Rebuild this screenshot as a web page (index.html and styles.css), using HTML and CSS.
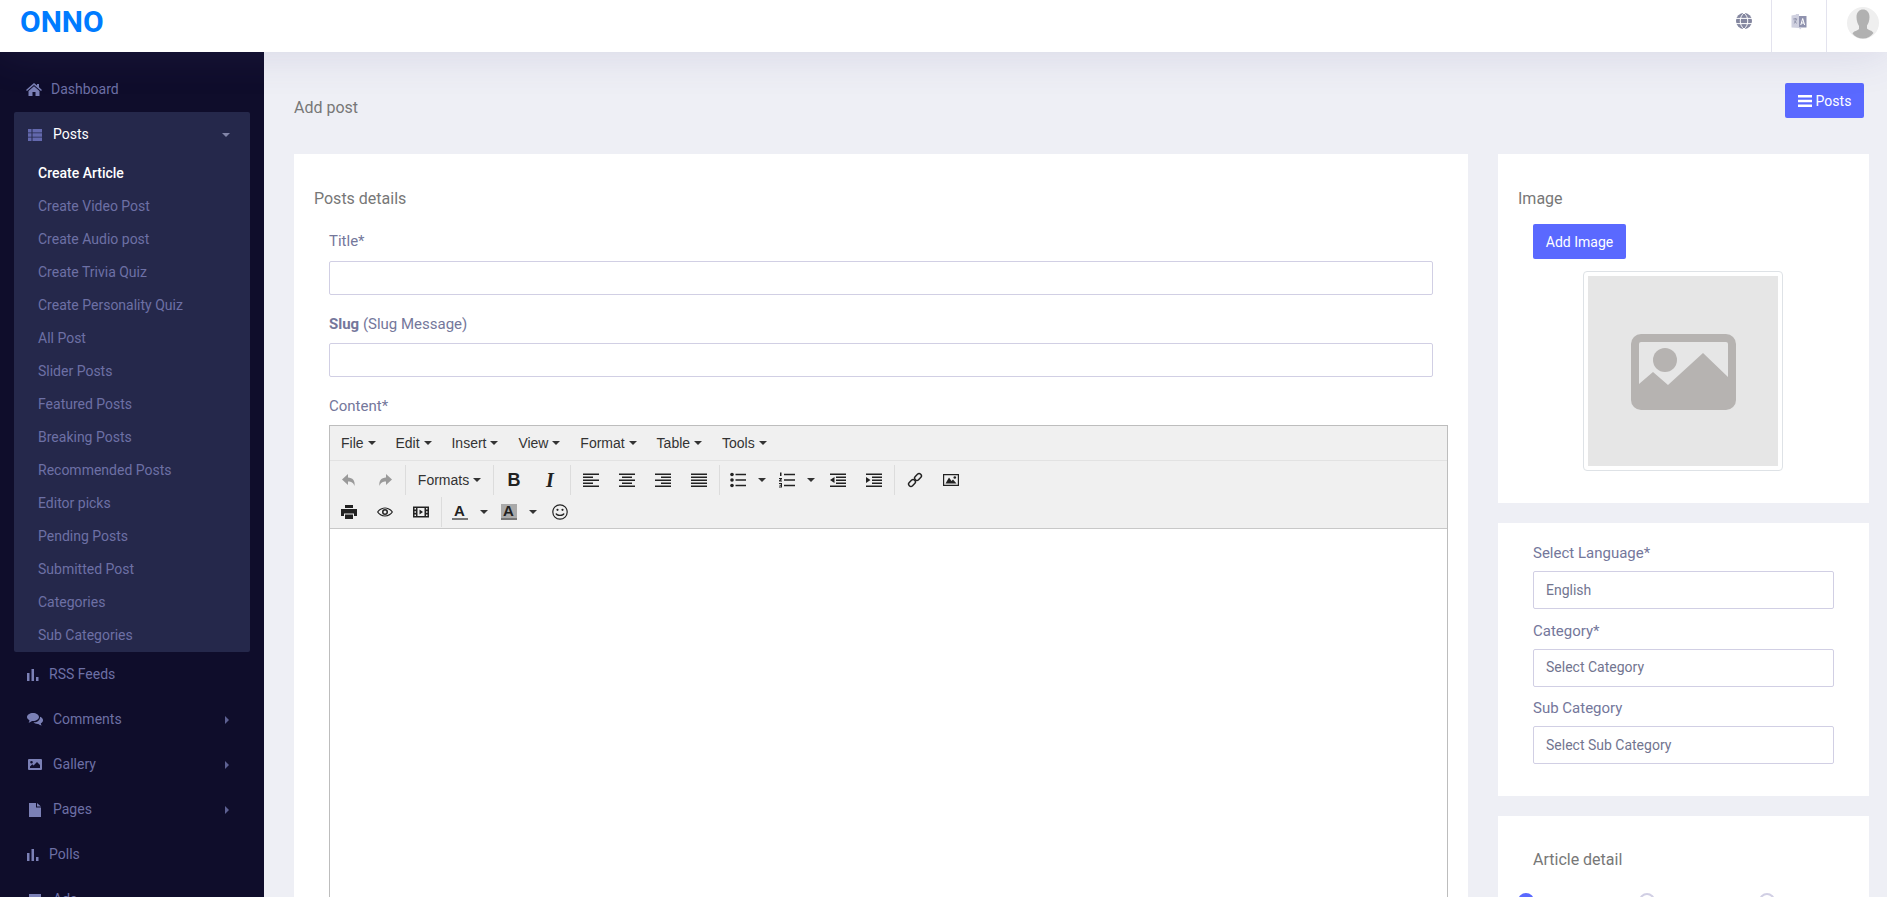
FILE: index.html
```html
<!DOCTYPE html>
<html lang="en">
<head>
<meta charset="utf-8">
<title>Add post</title>
<link rel="stylesheet" href="styles.css">
</head>
<body>
<header class="topbar">
  <a class="logo">ONNO</a>
  <div class="top-actions">
    <div class="top-cell">
      <svg class="top-icon" viewBox="0 0 16 16"><circle cx="8" cy="8" r="8" fill="#83869f"/><path d="M0 5.400h16M0 10.600h16M8 0c-5 4-5 12 0 16M8 0c5 4 5 12 0 16" fill="none" stroke="#fff" stroke-width="1"/></svg>
    </div>
    <div class="top-cell">
      <svg class="top-icon translate" viewBox="0 0 16 17"><path d="M.5 2.500L8 1v14L.5 14.500z" fill="#cfd0df"/><path d="M8 3h7.500v11.500H8z" fill="#8f92ae"/><path d="M5 1l3 0v2H5zM8 14.500h3L9 16.500z" fill="#cfd0df"/><path d="M9.800 12l1.900-6.500 1.900 6.500M10.500 10h2.500" fill="none" stroke="#fff" stroke-width="1"/><path d="M2.300 6h3.800M4.200 5v1M2.900 10.500c1.500-1 2.100-2.600 2.400-4.500M3.300 7.500c.5 1.300 1.300 2.300 2.500 2.800" fill="none" stroke="#83869f" stroke-width=".8"/></svg>
    </div>
    <div class="avatar">
      <svg viewBox="0 0 32 32"><circle cx="16" cy="16" r="16" fill="#efefef"/><path d="M9.500 10c0-5 3-7.500 6.500-7.500s6.500 2.500 6.500 7.500c0 4-1.300 7-2.500 8.500v3c1 1.500 5.500 2 6.500 4.500-2.500 3.500-6 5.500-10.500 5.500S8 30 5.500 26.500c1-2.500 5.500-3 6.500-4.500v-3C10.800 17 9.500 14 9.500 10z" fill="#b1b1b1"/></svg>
    </div>
  </div>
</header>

<div class="shell">
  <aside class="sidebar">
    <nav class="nav">
      <a class="nav-row">
        <svg class="nav-icon i-home" viewBox="0 0 16 13"><path d="M8 0l3 2.600V1h2v3.300L16 7l-1 1-7-6-7 6-1-1zM2.500 8L8 3.300 13.500 8v5H9.500V9h-3v4h-4z"/></svg>
        <span class="lbl-short">Dashboard</span>
      </a>
      <div class="nav-group">
        <a class="nav-row active">
          <svg class="nav-icon i-list" viewBox="0 0 14 12"><path d="M0 0h3.500v3.400H0zM4.500 0H14v3.400H4.500zM0 4.300h3.500v3.400H0zM4.500 4.300H14v3.400H4.500zM0 8.600h3.500V12H0zM4.500 8.600H14V12H4.500z"/></svg>
          <span class="lbl-wide">Posts</span>
          <span class="caret-down"></span>
        </a>
        <ul class="sub">
          <li class="current">Create Article</li>
          <li>Create Video Post</li>
          <li>Create Audio post</li>
          <li>Create Trivia Quiz</li>
          <li>Create Personality Quiz</li>
          <li>All Post</li>
          <li>Slider Posts</li>
          <li>Featured Posts</li>
          <li>Breaking Posts</li>
          <li>Recommended Posts</li>
          <li>Editor picks</li>
          <li>Pending Posts</li>
          <li>Submitted Post</li>
          <li>Categories</li>
          <li>Sub Categories</li>
        </ul>
      </div>
      <a class="nav-row">
        <svg class="nav-icon i-bars" viewBox="0 0 12 12"><path d="M0 4h2.500v8H0zM4.500 0H7v12H4.500zM9 8h2.500v4H9z"/></svg>
        <span class="lbl-short">RSS Feeds</span>
      </a>
      <a class="nav-row">
        <svg class="nav-icon i-comments" viewBox="0 0 16 13"><path d="M6 0c3.300 0 6 1.800 6 4s-2.700 4-6 4l-1-.1C4 8.800 3 9.300 1.500 9.500 2.300 8.700 2.500 8 2.400 7.200.9 6.500 0 5.300 0 4c0-2.200 2.700-4 6-4z"/><path d="M13 3.800c1.800.7 3 1.900 3 3.400 0 1.200-.8 2.300-2.200 3 .1.800.3 1.500 1 2.300-1.500-.2-2.500-.7-3.500-1.500-2.100.1-3.800-.5-4.800-1.700 3.700.2 6.800-2 6.500-5.500z"/></svg>
        <span class="lbl-wide">Comments</span>
        <span class="caret-right"></span>
      </a>
      <a class="nav-row">
        <svg class="nav-icon i-gallery" viewBox="0 0 14 11"><path fill-rule="evenodd" d="M1 0h12a1 1 0 0 1 1 1v9a1 1 0 0 1-1 1H1a1 1 0 0 1-1-1V1a1 1 0 0 1 1-1zM3.500 2a1.300 1.300 0 1 0 0 2.600 1.300 1.300 0 0 0 0-2.600zM2 9h10V6L9 3 5.500 6.500 4.300 5.300 2 7.500z"/></svg>
        <span class="lbl-wide">Gallery</span>
        <span class="caret-right"></span>
      </a>
      <a class="nav-row">
        <svg class="nav-icon i-file" viewBox="0 0 12 14"><path d="M0 0h7v4.500h5V14H0zM8 0l4 3.500H8z"/></svg>
        <span class="lbl-wide">Pages</span>
        <span class="caret-right"></span>
      </a>
      <a class="nav-row">
        <svg class="nav-icon i-bars" viewBox="0 0 12 12"><path d="M0 4h2.500v8H0zM4.500 0H7v12H4.500zM9 8h2.500v4H9z"/></svg>
        <span class="lbl-short">Polls</span>
      </a>
      <a class="nav-row">
        <svg class="nav-icon i-gallery" viewBox="0 0 14 11"><path d="M1 0h12v11H1z"/></svg>
        <span class="lbl-wide">Ads</span>
      </a>
    </nav>
  </aside>

  <main class="content">
    <div class="page-head">
      <h1 class="page-title">Add post</h1>
      <a class="btn btn-posts">
        <svg class="btn-icon" viewBox="0 0 14 12"><path d="M0 0h14v2.600H0zM0 4.700h14v2.600H0zM0 9.400h14V12H0z"/></svg>
        Posts
      </a>
    </div>

    <div class="columns">
      <section class="card card-main">
        <h2 class="card-title">Posts details</h2>
        <div class="form-block">
          <div class="field">
            <label class="field-label label-first">Title*</label>
            <input class="text-input" type="text">
          </div>
          <div class="field">
            <label class="field-label"><b>Slug</b> (Slug Message)</label>
            <input class="text-input" type="text">
          </div>
          <div class="field">
            <label class="field-label">Content*</label>
            <div class="editor">
              <div class="menubar">
                <span class="menu-item">File<i class="tc"></i></span>
                <span class="menu-item">Edit<i class="tc"></i></span>
                <span class="menu-item">Insert<i class="tc"></i></span>
                <span class="menu-item">View<i class="tc"></i></span>
                <span class="menu-item">Format<i class="tc"></i></span>
                <span class="menu-item">Table<i class="tc"></i></span>
                <span class="menu-item">Tools<i class="tc"></i></span>
              </div>
              <div class="toolbar">
                <div class="tb-row">
                  <div class="tb-group tight">
                    <span class="tb"><svg class="ic" viewBox="0 0 16 16"><path class="off" d="M7 2L1 7.500 7 13V9.500c3.200 0 5.300.9 6.500 4.500.9-5.500-2-8.300-6.500-8.500z"/></svg></span>
                    <span class="tb"><svg class="ic" viewBox="0 0 16 16"><path class="off" d="M9 2l6 5.500L9 13V9.500c-3.200 0-5.300.9-6.500 4.500-.9-5.500 2-8.300 6.500-8.500z"/></svg></span>
                  </div>
                  <div class="tb-group">
                    <span class="tb tb-formats">Formats<i class="tc"></i></span>
                  </div>
                  <div class="tb-group">
                    <span class="tb tb-bold">B</span>
                    <span class="tb tb-italic">I</span>
                  </div>
                  <div class="tb-group">
                    <span class="tb"><svg class="ic" viewBox="0 0 16 16"><path d="M0 1.500h16v1.500H0zM0 4.500h10v1.500H0zM0 7.500h16v1.500H0zM0 10.500h10v1.500H0zM0 13.500h16v1.500H0z"/></svg></span>
                    <span class="tb"><svg class="ic" viewBox="0 0 16 16"><path d="M0 1.500h16v1.500H0zM3 4.500h10v1.500H3zM0 7.500h16v1.500H0zM3 10.500h10v1.500H3zM0 13.500h16v1.500H0z"/></svg></span>
                    <span class="tb"><svg class="ic" viewBox="0 0 16 16"><path d="M0 1.500h16v1.500H0zM6 4.500h10v1.500H6zM0 7.500h16v1.500H0zM6 10.500h10v1.500H6zM0 13.500h16v1.500H0z"/></svg></span>
                    <span class="tb"><svg class="ic" viewBox="0 0 16 16"><path d="M0 1.500h16v1.500H0zM0 4.500h16v1.500H0zM0 7.500h16v1.500H0zM0 10.500h16v1.500H0zM0 13.500h16v1.500H0z"/></svg></span>
                  </div>
                  <div class="tb-group">
                    <span class="tb tb-split"><svg class="ic" viewBox="0 0 16 16"><circle cx="2" cy="2.500" r="1.800"/><circle cx="2" cy="8" r="1.800"/><circle cx="2" cy="13.500" r="1.800"/><path d="M5.500 1.700H16v1.500H5.500zM5.500 7.200H16v1.500H5.500zM5.500 12.700H16v1.500H5.500z"/></svg></span>
                    <span class="tb-caret"><i class="tc"></i></span>
                    <span class="tb tb-split"><svg class="ic" viewBox="0 0 16 16"><path d="M1 .5h1.500v3.500H1zM0 6h3v1l-1.500 1.500H3v1H0v-1L1.500 7H0zM0 11h3v4.500H0v-1h2v-.8H.500v-1H2V12H0z"/><path d="M5 1.700h11v1.500H5zM5 7.200h11v1.500H5zM5 12.700h11v1.500H5z"/></svg></span>
                    <span class="tb-caret"><i class="tc"></i></span>
                    <span class="tb"><svg class="ic" viewBox="0 0 16 16"><path d="M0 1.500h16v1.500H0zM6 4.500h10v1.500H6zM6 7.500h10v1.500H6zM6 10.500h10v1.500H6zM0 13.500h16v1.500H0zM4.500 5v6L0 8z"/></svg></span>
                    <span class="tb"><svg class="ic" viewBox="0 0 16 16"><path d="M0 1.500h16v1.500H0zM6 4.500h10v1.500H6zM6 7.500h10v1.500H6zM6 10.500h10v1.500H6zM0 13.500h16v1.500H0zM0 5v6l4.500-3z"/></svg></span>
                  </div>
                  <div class="tb-group end">
                    <span class="tb"><svg class="ic" viewBox="0 0 16 16"><g fill="none" stroke="#222" stroke-width="1.500"><rect x="-3.800" y="-2.300" width="7.600" height="4.600" rx="2.300" transform="translate(5 11) rotate(-45)"/><rect x="-3.800" y="-2.300" width="7.600" height="4.600" rx="2.300" transform="translate(11 5) rotate(-45)"/></g></svg></span>
                    <span class="tb"><svg class="ic" viewBox="0 0 16 16"><path fill-rule="evenodd" d="M0 2h16v12H0zM1.200 3.200v9.600h13.600V3.200z"/><path d="M2.500 11.500l3.500-6 2.500 3.500 1.500-1.500 3.500 4z"/><circle cx="11.800" cy="5.500" r="1.300"/></svg></span>
                  </div>
                </div>
                <div class="tb-row">
                  <div class="tb-group tight">
                    <span class="tb"><svg class="ic" viewBox="0 0 16 16"><path d="M4 1h8v3H4zM0 5h16v7h-3V9.500H3V12H0zM4 10.500h8V15H4z"/></svg></span>
                    <span class="tb"><svg class="ic" viewBox="0 0 16 16"><path fill-rule="evenodd" d="M8 3.500c3.500 0 6.500 2 8 4.500-1.500 2.500-4.500 4.500-8 4.500S1.500 10.500 0 8c1.500-2.500 4.500-4.500 8-4.500zM8 4.500C5.700 4.500 3 5.900 1.300 8 3 10.100 5.700 11.500 8 11.500s5-1.400 6.700-3.500C13 5.900 10.300 4.500 8 4.500z"/><path fill-rule="evenodd" d="M8 5a3 3 0 1 1 0 6 3 3 0 0 1 0-6zM8 6.500a1.500 1.500 0 1 0 0 3 1.500 1.500 0 0 0 0-3z"/></svg></span>
                    <span class="tb"><svg class="ic" viewBox="0 0 16 16"><path fill-rule="evenodd" d="M0 2.500h16v11H0zM1.500 4v1.500h1.500V4zM1.500 7.200v1.500h1.500V7.200zM1.500 10.500V12h1.500v-1.500zM13 4v1.500h1.500V4zM13 7.200v1.500h1.500V7.200zM13 10.500V12h1.500v-1.500zM4.500 4v8h7V4z"/><path d="M6.500 5.500L10 8l-3.500 2.500z"/></svg></span>
                  </div>
                  <div class="tb-group end">
                    <span class="tb tb-split"><span class="letter">A</span></span>
                    <span class="tb-caret"><i class="tc"></i></span>
                    <span class="tb tb-split"><span class="letter bg">A</span></span>
                    <span class="tb-caret"><i class="tc"></i></span>
                    <span class="tb"><svg class="ic" viewBox="0 0 16 16"><g fill="none" stroke="#222" stroke-width="1.200"><circle cx="8" cy="8" r="7.200"/><path d="M4 9.500c1 2.500 7 2.500 8 0" stroke-width="1.400"/></g><circle cx="5.500" cy="5.800" r="1.100"/><circle cx="10.500" cy="5.800" r="1.100"/></svg></span>
                  </div>
                </div>
              </div>
              <div class="editor-body"></div>
            </div>
          </div>
        </div>
      </section>

      <div class="side">
        <section class="card card-image">
          <h2 class="card-title">Image</h2>
          <a class="btn btn-add">Add Image</a>
          <div class="thumb">
            <svg class="thumb-img" viewBox="0 0 190 190"><rect width="190" height="190" fill="#e6e6e6"/><g transform="translate(43 58)"><rect width="105" height="76" rx="10" fill="#b6b3b1"/><path d="M8 10q0-2 2-2h85q2 0 2 2v33L72 19 37 51 22 38 8 50z" fill="#e6e6e6"/><circle cx="34" cy="26" r="12" fill="#b6b3b1"/></g></svg>
          </div>
        </section>

        <section class="card card-selects">
          <div class="sel-field">
            <label class="field-label">Select Language*</label>
            <select class="select"><option>English</option></select>
          </div>
          <div class="sel-field">
            <label class="field-label">Category*</label>
            <select class="select"><option>Select Category</option></select>
          </div>
          <div class="sel-field">
            <label class="field-label">Sub Category</label>
            <select class="select"><option>Select Sub Category</option></select>
          </div>
        </section>

        <section class="card card-detail">
          <h2 class="card-title">Article detail</h2>
          <div class="radios">
            <span class="radio on"></span>
            <span class="radio"></span>
            <span class="radio"></span>
          </div>
        </section>
      </div>
    </div>
  </main>
</div>
</body>
</html>
```

FILE: styles.css
```css
* { box-sizing: border-box; }
html, body { margin: 0; height: 897px; overflow: hidden; }
body { font-family: Roboto, "Liberation Sans", sans-serif; font-size: 14px; background: #eeeff5; color: #74779b; }

.topbar { height: 52px; background: #fff; display: flex; justify-content: space-between; position: relative; z-index: 2; box-shadow: 0 0 45px rgba(90, 80, 150, .16); }
.logo { color: #007bff; font-weight: 700; font-size: 30px; line-height: 44px; padding-left: 20px; }
.top-actions { display: flex; }
.top-cell { width: 55px; border-right: 1px solid #e3e3ee; display: flex; align-items: flex-start; justify-content: center; padding-top: 13px; }
.top-icon { width: 16px; height: 16px; }
.translate { height: 17px; }
.avatar { width: 60px; padding: 7px 0 0 20px; }
.avatar svg { width: 32px; height: 32px; display: block; }

.shell { display: flex; height: 845px; }
.sidebar { width: 264px; flex: none; background: #0f0d2b; overflow: hidden; padding: 15px 14px 0; }
.nav-row { height: 45px; display: flex; align-items: center; color: #6d70a5; padding: 0 0 2px 13px; }
.nav-icon { fill: #7b80b6; flex: none; position: relative; top: 1px; }
.i-home { width: 16px; height: 13px; margin-left: -1px; margin-right: 9px; }
.i-list { width: 14px; height: 12px; margin-left: 1px; margin-right: 11px; }
.i-bars { width: 12px; height: 12px; margin-right: 10px; }
.i-comments { width: 16px; height: 13px; margin-right: 10px; }
.i-gallery { width: 14px; height: 11px; margin-left: 1px; margin-right: 11px; }
.i-file { width: 12px; height: 14px; margin-left: 2px; margin-right: 12px; }
.lbl-short { flex: none; }
.lbl-wide { flex: 1; }
.nav-group { background: #25284b; border-radius: 2px; }
.nav-row.active { color: #fff; }
.nav-row.active .nav-icon { fill: #6368ad; }
.caret-down { width: 0; height: 0; border-left: 4px solid transparent; border-right: 4px solid transparent; border-top: 4px solid #8285a8; margin: 2px 20px 0 0; }
.caret-right { width: 0; height: 0; border-top: 4px solid transparent; border-bottom: 4px solid transparent; border-left: 4px solid #5d6092; margin: 2px 21px 0 0; }
.sub { list-style: none; margin: 0; padding: 0 0 0 24px; }
.sub li { height: 33px; line-height: 33px; color: #6d70a5; }
.sub li.current { color: #fff; font-weight: 500; }

.content { flex: 1; min-width: 0; padding: 0 18px 0 30px; overflow: hidden; }
.page-head { height: 102px; display: flex; justify-content: space-between; align-items: flex-start; padding: 31px 5px 0 0; }
.page-title { margin: 15px 0 0; font-size: 16px; line-height: 20px; font-weight: 400; color: #777; }
.btn { background: #5a69ff; color: #fff; border-radius: 2px; height: 35px; display: inline-flex; align-items: center; justify-content: center; font-size: 14px; }
.btn-posts { width: 79px; }
.btn-icon { width: 14px; height: 12px; fill: #fff; margin-right: 4px; }
.columns { display: grid; grid-template-columns: 1174px 371px; column-gap: 30px; align-items: start; }
.card { background: #fff; }
.card-title { margin: 0; font-size: 16px; line-height: 24px; font-weight: 400; color: #777; }
.card-main { padding: 33px 35px 0 20px; height: 760px; }
.form-block { padding: 20px 0 0 15px; }
.field { margin-bottom: 19px; }
.field-label { display: block; font-size: 15px; line-height: 21px; color: #74779b; margin-bottom: 8px; }
.label-first { margin-bottom: 9px; }
.text-input { display: block; width: 100%; height: 34px; border: 1px solid #d1cfe4; border-radius: 2px; background: #fff; outline: 0; }

.editor { border: 1px solid #bdbdbd; margin: 1px -15px 0 0; background: #fff; font-family: "Liberation Sans", Arial, sans-serif; color: #333; }
.menubar { height: 35px; background: #f0f0f0; border-bottom: 1px solid #e2e2e2; display: flex; align-items: center; padding-left: 11px; font-size: 14px; }
.menu-item { padding-right: 19.900px; display: inline-flex; align-items: center; }
.tc { display: inline-block; width: 0; height: 0; border-left: 4px solid transparent; border-right: 4px solid transparent; border-top: 4px solid #333; margin-left: 4px; }
.toolbar { background: #f0f0f0; height: 68px; border-bottom: 1px solid #c8c8c8; padding-top: 3px; }
.tb-row { display: flex; height: 32px; }
.tb-group { display: flex; padding: 0 2px; border-right: 1px solid #dcdcdc; margin: 1px 0; }
.tb-group.tight { padding-left: 1px; }
.tb-group.end { border-right: 0; }
.tb { width: 36px; display: flex; align-items: center; justify-content: center; color: #222; }
.ic { width: 16px; height: 16px; fill: #222; display: block; }
.off { fill: #9a9a9a; }
.tb-formats { width: 83px; font-size: 14px; color: #333; }
.tb-bold { font-weight: 700; font-size: 18px; }
.tb-italic { font-family: "Liberation Serif", serif; font-style: italic; font-weight: 700; font-size: 20px; }
.tb-split { width: 31px; }
.tb-caret { width: 18px; display: flex; align-items: center; justify-content: center; }
.tb-caret .tc { margin-left: 0; }
.letter { font-size: 15px; font-weight: 700; line-height: 14px; width: 16px; text-align: center; border-bottom: 2px solid #777; }
.letter.bg { background: #aaa; }
.editor-body { height: 400px; }

.side { display: flex; flex-direction: column; gap: 20px; }
.card-image { padding: 33px 20px 0; height: 349px; }
.btn-add { display: flex; width: 93px; margin: 13px 0 0 15px; }
.thumb { width: 200px; height: 200px; margin: 12px 0 0 65px; border: 1px solid #dee2e6; border-radius: 4px; padding: 4px; }
.thumb-img { display: block; width: 190px; height: 190px; }
.card-selects { height: 273px; padding: 20px 35px 0; }
.sel-field { margin-bottom: 11.500px; }
.sel-field .field-label { margin-bottom: 7px; }
.select { display: block; width: 100%; height: 38px; border: 1px solid #d1cfe4; border-radius: 2px; background: #fff; padding: 0 12px 1px; font: 14px Roboto, sans-serif; color: #72758f; appearance: none; -webkit-appearance: none; outline: 0; }
.card-detail { padding: 32px 20px 0; height: 120px; }
.card-detail .card-title { margin-left: 15px; }
.radios { display: grid; grid-template-columns: repeat(3, 120.500px); margin-top: 21px; }
.radio { width: 16px; height: 16px; border-radius: 50%; border: 2px solid #d1cfe4; background: #fff; }
.radio.on { background: #5a69ff; border-color: #5a69ff; }
```
